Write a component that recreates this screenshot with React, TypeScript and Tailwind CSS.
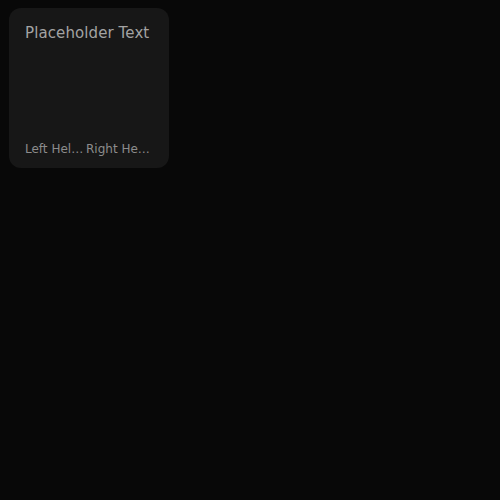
export default function App() {
  return (
    <div className="min-h-[500px] w-[500px] bg-[#080808] p-2 pl-[9px] font-['DejaVu_Sans',sans-serif]">
      <div className="flex h-[160px] w-[160px] flex-col justify-between rounded-xl bg-[#171717] px-4 pb-[11px] pt-[15px]">
        <div className="truncate text-[15px] leading-5 tracking-[0.1px] text-[#a3a3a3]">Placeholder Text</div>
        <div className="flex text-[12px] leading-4 text-[#8c8c8c]">
          <span className="w-[61px] shrink-0 truncate">Left Helper</span>
          <span className="w-[65px] shrink-0 truncate">Right Helper</span>
        </div>
      </div>
    </div>
  );
}
